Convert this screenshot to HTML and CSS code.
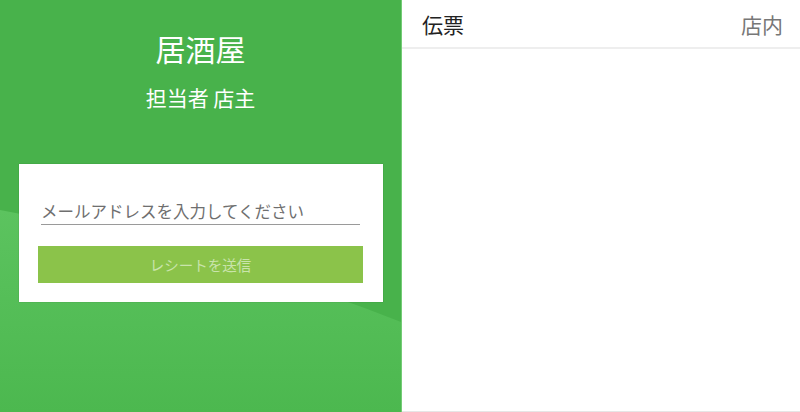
FILE: index.html
```html
<!DOCTYPE html>
<html lang="ja">
<head>
<meta charset="utf-8">
<link rel="stylesheet" href="styles.css">
</head>
<body>
<div class="app">
  <section class="left">
    <svg class="wave" viewBox="0 0 401 412" preserveAspectRatio="none" aria-hidden="true">
      <defs>
        <linearGradient id="wg" x1="0" y1="0" x2="0" y2="1">
          <stop offset="0" stop-color="#5cc35f"/>
          <stop offset="1" stop-color="#4cb84f"/>
        </linearGradient>
      </defs>
      <path d="M0,210 Q220,250 401,322 L401,412 L0,412 Z" fill="url(#wg)"/>
    </svg>
    <header class="shop">
      <h1 class="shop-name">居酒屋</h1>
      <p class="staff">担当者 店主</p>
    </header>
    <form class="card">
      <input class="email" type="text" placeholder="メールアドレスを入力してください">
      <button class="send" type="button">レシートを送信</button>
    </form>
  </section>
  <section class="right">
    <div class="bar">
      <span class="bar-title">伝票</span>
      <span class="bar-mode">店内</span>
    </div>
    <div class="list"></div>
  </section>
</div>
</body>
</html>
```
FILE: styles.css
```css
html, body {
  margin: 0;
  padding: 0;
  height: 100%;
}
body {
  font-family: "Noto Sans CJK JP", "Noto Sans", sans-serif;
  background: #fff;
}
.app {
  display: flex;
  width: 800px;
  height: 412px;
  overflow: hidden;
}
.left {
  position: relative;
  width: 401px;
  flex: none;
  background: #48b24b;
  border-right: 1px solid #74cc76;
  display: flex;
  flex-direction: column;
}
.wave {
  position: absolute;
  left: 0;
  top: 0;
  width: 401px;
  height: 412px;
}
.shop {
  position: relative;
  text-align: center;
  color: #fff;
  padding-top: 29px;
}
.shop-name {
  margin: 0;
  font-size: 30px;
  font-weight: 400;
  line-height: 38px;
}
.staff {
  margin: 17px 0 0;
  font-size: 21px;
  line-height: 26px;
}
.card {
  position: relative;
  margin: 54px 0 0 19px;
  width: 364px;
  box-sizing: border-box;
  background: #fff;
  padding: 34px 20px 19px 19px;
  box-shadow: 0 0 1px rgba(0,0,0,0.25);
  display: flex;
  flex-direction: column;
}
.email {
  margin: 0 0 0 3px;
  width: 319px;
  box-sizing: border-box;
  height: 27px;
  padding: 0;
  border: none;
  border-bottom: 1px solid #9a9a9a;
  font-family: inherit;
  font-size: 16.5px;
  color: #333;
  outline: none;
  background: transparent;
}
.email::placeholder {
  color: #6f6f6f;
}
.send {
  margin-top: 21px;
  height: 37px;
  width: 325px;
  border: none;
  background: #8bc34a;
  color: #c9e4ab;
  font-family: inherit;
  font-size: 14.5px;
  padding: 0;
}
.right {
  flex: 1;
  display: flex;
  flex-direction: column;
  border-bottom: 1px solid #e6e6e6;
  height: 411px;
}
.bar {
  height: 47px;
  border-bottom: 2px solid #eeeeee;
  display: flex;
  align-items: center;
  justify-content: space-between;
  padding: 0 17px 0 20px;
}
.bar-title {
  font-size: 21px;
  color: #222;
}
.bar-mode {
  font-size: 21px;
  color: #777;
}
.list {
  flex: 1;
}
```
